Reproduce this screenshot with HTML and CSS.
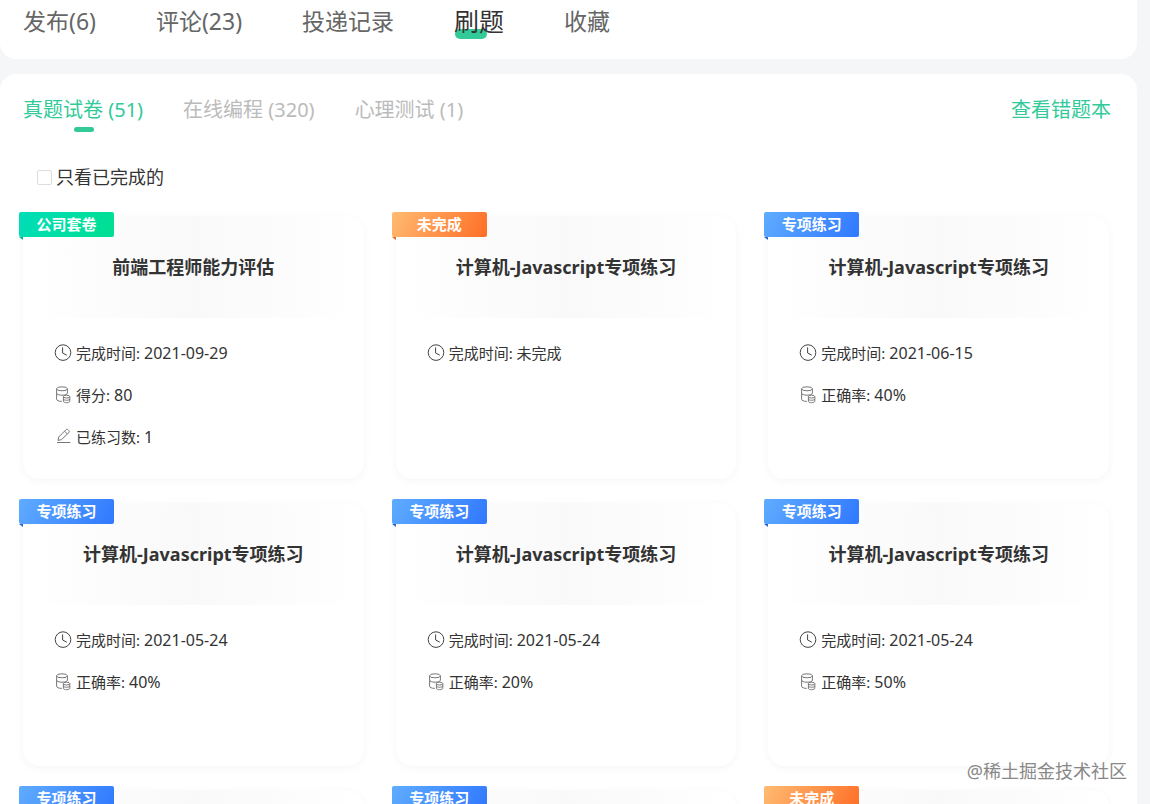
FILE: index.html
```html
<!DOCTYPE html>
<html lang="zh-CN">
<head>
  <meta charset="UTF-8" />
  <meta name="viewport" content="width=device-width, initial-scale=1.0"/>
  <title>刷题</title>
  <link rel="stylesheet" href="styles.css">
</head>
<body>

  <!-- Icons -->
  <svg class="sprite" aria-hidden="true">
    <symbol id="icon-clock" viewBox="0 0 18 18">
      <circle cx="9" cy="8.6" r="7.8"/>
      <path d="M8.6 3.4V9L12.8 11.2"/>
    </symbol>
    <symbol id="icon-coins" viewBox="0 0 18 18">
      <ellipse cx="8" cy="2.8" rx="5.4" ry="2"/>
      <path d="M2.6 2.8V7.2C2.6 8.4 5 9.2 8 9.2S13.4 8.4 13.4 7.2V2.8"/>
      <path d="M2.6 7.2V13.2C2.6 14.4 4.6 15.4 7.8 15.4"/>
      <ellipse cx="12.6" cy="10.6" rx="3.2" ry="1.4"/>
      <path d="M9.4 10.6V15.2C9.4 17.2 15.8 17.2 15.8 15.2V10.6M9.4 12.9C9.4 14.7 15.8 14.7 15.8 12.9"/>
    </symbol>
    <symbol id="icon-edit" viewBox="0 0 18 18">
      <path d="M4 12.4L4.7 9L12 1.7C12.6 1.1 13.4 1.1 14 1.7L14.9 2.6C15.5 3.2 15.5 4 14.9 4.6L7.4 11.7L4 12.4ZM10.6 3.2L13.4 6M3 14.5H16.4"/>
    </symbol>
  </svg>

  <div class="page">

    <!-- Main tabs -->
    <nav class="panel main-tabs">
      <a href="#">发布(6)</a>
      <a href="#">评论(23)</a>
      <a href="#">投递记录</a>
      <a href="#" class="active">刷题</a>
      <a href="#">收藏</a>
    </nav>

    <main class="panel content">
      <!-- Sub tabs -->
      <div class="sub-bar">
        <nav class="sub-tabs">
          <a href="#" class="active">真题试卷 (51)</a>
          <a href="#">在线编程 (320)</a>
          <a href="#">心理测试 (1)</a>
        </nav>
        <a href="#" class="wrong-book">查看错题本</a>
      </div>

      <div class="filter">
        <input type="checkbox" id="only-done">
        <label for="only-done">只看已完成的</label>
      </div>

      <!-- Paper cards -->
      <div class="cards">
        <div class="card">
          <span class="badge green">公司套卷</span>
          <h3>前端工程师能力评估</h3>
          <ul>
            <li><svg><use href="#icon-clock"/></svg>完成时间: <span class="num">2021-09-29</span></li>
            <li><svg class="thin"><use href="#icon-coins"/></svg>得分: <span class="num">80</span></li>
            <li><svg class="thin"><use href="#icon-edit"/></svg>已练习数: <span class="num">1</span></li>
          </ul>
        </div>
        <div class="card">
          <span class="badge orange">未完成</span>
          <h3>计算机-Javascript专项练习</h3>
          <ul>
            <li><svg><use href="#icon-clock"/></svg>完成时间: 未完成</li>
          </ul>
        </div>
        <div class="card">
          <span class="badge blue">专项练习</span>
          <h3>计算机-Javascript专项练习</h3>
          <ul>
            <li><svg><use href="#icon-clock"/></svg>完成时间: <span class="num">2021-06-15</span></li>
            <li><svg class="thin"><use href="#icon-coins"/></svg>正确率: <span class="num">40%</span></li>
          </ul>
        </div>
        <div class="card">
          <span class="badge blue">专项练习</span>
          <h3>计算机-Javascript专项练习</h3>
          <ul>
            <li><svg><use href="#icon-clock"/></svg>完成时间: <span class="num">2021-05-24</span></li>
            <li><svg class="thin"><use href="#icon-coins"/></svg>正确率: <span class="num">40%</span></li>
          </ul>
        </div>
        <div class="card">
          <span class="badge blue">专项练习</span>
          <h3>计算机-Javascript专项练习</h3>
          <ul>
            <li><svg><use href="#icon-clock"/></svg>完成时间: <span class="num">2021-05-24</span></li>
            <li><svg class="thin"><use href="#icon-coins"/></svg>正确率: <span class="num">20%</span></li>
          </ul>
        </div>
        <div class="card">
          <span class="badge blue">专项练习</span>
          <h3>计算机-Javascript专项练习</h3>
          <ul>
            <li><svg><use href="#icon-clock"/></svg>完成时间: <span class="num">2021-05-24</span></li>
            <li><svg class="thin"><use href="#icon-coins"/></svg>正确率: <span class="num">50%</span></li>
          </ul>
        </div>
        <div class="card">
          <span class="badge blue">专项练习</span>
        </div>
        <div class="card">
          <span class="badge blue">专项练习</span>
        </div>
        <div class="card">
          <span class="badge orange">未完成</span>
        </div>
      </div>
    </main>

    <div class="watermark">@稀土掘金技术社区</div>
  </div>

</body>
</html>
```
FILE: styles.css
```css
* { box-sizing: border-box; }
body { margin: 0; background: #f5f6f8; color: #333; font-family: "Noto Sans", "Noto Sans CJK SC", sans-serif; }
a { text-decoration: none; color: inherit; }
ul { list-style: none; margin: 0; padding: 0; }
.sprite { display: none; }
.page { position: relative; height: 100vh; overflow: hidden; padding-right: 13px; }
.panel { background: #fff; border-radius: 16px; }

.main-tabs { display: flex; align-items: center; gap: 60px; margin-bottom: 15px; padding: 3px 23px 20px; border-radius: 0 0 16px 16px; font-size: 23px; line-height: 36px; color: #666; }
.main-tabs .active { position: relative; z-index: 0; font-size: 25px; color: #333; }
.main-tabs .active::before { content: ""; position: absolute; z-index: -1; left: 1px; bottom: 0; width: 32px; height: 10px; border-radius: 5px; background: #32ca99; }

.content { padding: 20px 26px 20px 23px; }
.sub-bar { display: flex; justify-content: space-between; font-size: 20px; line-height: 32px; }
.sub-tabs { display: flex; gap: 40px; color: #bbb; }
.sub-tabs .active { position: relative; color: #32ca99; }
.sub-tabs .active::after { content: ""; position: absolute; left: 50%; bottom: -6px; width: 20px; height: 5px; margin-left: -9px; border-radius: 3px; background: #32ca99; }
.wrong-book { color: #32ca99; }

.filter { display: flex; align-items: center; gap: 4px; margin: 38px 0 25px 14px; font-size: 18px; line-height: 27px; }
.filter input { appearance: none; width: 15px; height: 15px; margin: 0; border: 1px solid #ddd; border-radius: 2px; background: #fff; }
.filter input:checked { background: #32ca99; }

.cards { display: grid; grid-template-columns: repeat(3, 1fr); gap: 24px 32px; padding-right: 2px; }
.card { position: relative; min-height: 263px; border-radius: 16px; background: linear-gradient(90deg, #fff 2%, #f9f9f9 50%, #fff 98%) top / 100% 102px no-repeat #fff; box-shadow: 0 2px 8px rgba(0, 0, 0, 0.04); }
.card h3 { margin: 0; padding: 38px 0; font-size: 18px; line-height: 26px; text-align: center; }
.card ul { padding: 14px 31px; }
.card li { display: flex; align-items: center; gap: 4px; font-size: 15px; line-height: 42px; }
.card li svg { width: 18px; height: 18px; fill: none; stroke: #444; stroke-width: 1; }
.card li .thin { stroke: #777; }
.num { font-size: 16px; }

.badge { position: absolute; left: -4px; top: -4px; width: 95px; height: 25px; border-radius: 2px; color: #fff; font-size: 15px; font-weight: bold; line-height: 25px; text-align: center; }
.badge::after { content: ""; position: absolute; left: 0; top: 25px; border-top: 3px solid; border-left: 4px solid transparent; }
.green { background: linear-gradient(120deg, #00ddb8, #00df91); }
.green::after { border-top-color: #00b982; }
.orange { background: linear-gradient(120deg, #ffbb72, #ff6e26); }
.orange::after { border-top-color: #e8651c; }
.blue { background: linear-gradient(120deg, #5facff, #3078ff); }
.blue::after { border-top-color: #2867d0; }

.watermark { position: absolute; right: 23px; bottom: 20px; color: #888; font-size: 18px; line-height: 26px; }
```
